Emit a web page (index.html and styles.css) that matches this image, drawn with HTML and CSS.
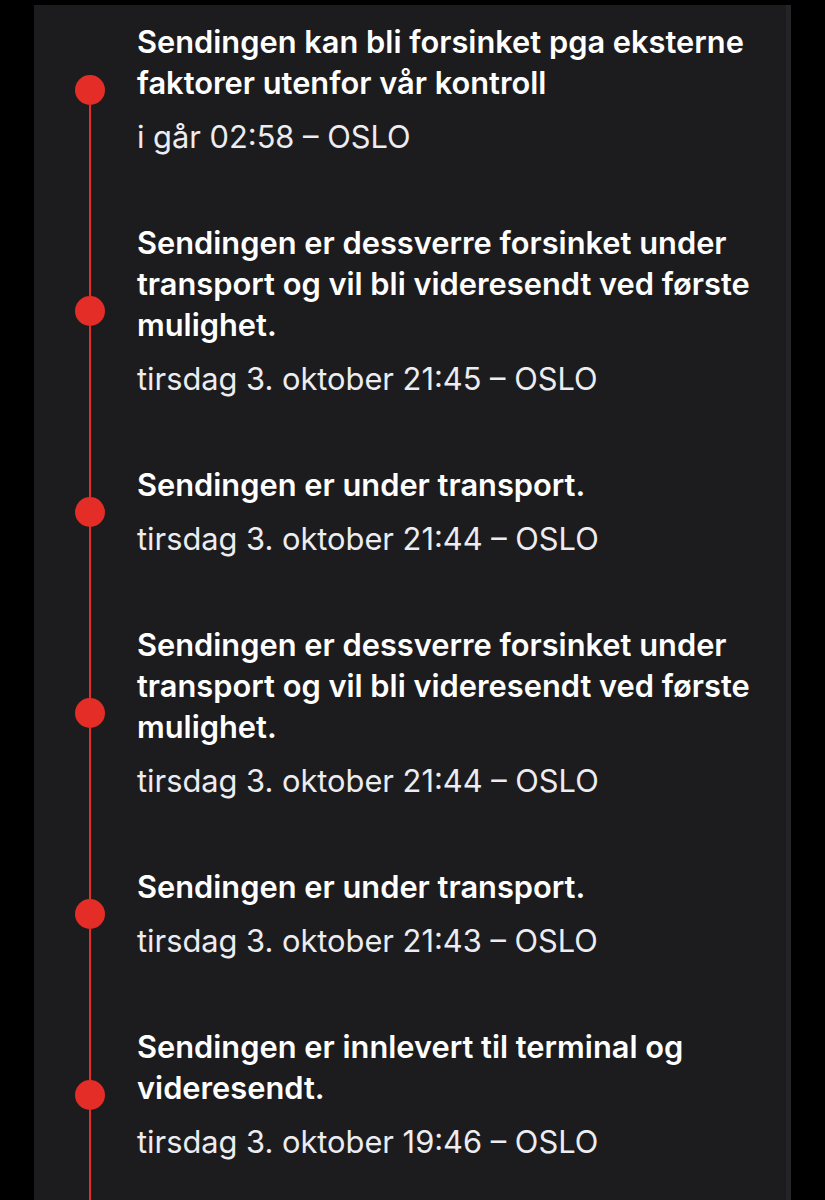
FILE: index.html
```html
<!DOCTYPE html>
<html lang="nb">
<head>
  <meta charset="utf-8">
  <title>Sporing</title>
  <link rel="stylesheet" href="styles.css">
</head>
<body>
  <div class="sheet">
    <ol class="timeline">
      <li class="event first">
        <div class="rail"><span class="seg"></span><span class="dot"></span><span class="seg"></span></div>
        <div class="event-body">
          <p class="event-title">Sendingen kan bli forsinket pga eksterne faktorer utenfor vår kontroll</p>
          <p class="event-meta">i går 02:58 – OSLO</p>
        </div>
      </li>
      <li class="event">
        <div class="rail"><span class="seg"></span><span class="dot"></span><span class="seg"></span></div>
        <div class="event-body">
          <p class="event-title">Sendingen er dessverre forsinket under transport og vil bli videresendt ved første mulighet.</p>
          <p class="event-meta">tirsdag 3. oktober 21:45 – OSLO</p>
        </div>
      </li>
      <li class="event">
        <div class="rail"><span class="seg"></span><span class="dot"></span><span class="seg"></span></div>
        <div class="event-body">
          <p class="event-title">Sendingen er under transport.</p>
          <p class="event-meta">tirsdag 3. oktober 21:44 – OSLO</p>
        </div>
      </li>
      <li class="event">
        <div class="rail"><span class="seg"></span><span class="dot"></span><span class="seg"></span></div>
        <div class="event-body">
          <p class="event-title">Sendingen er dessverre forsinket under transport og vil bli videresendt ved første mulighet.</p>
          <p class="event-meta">tirsdag 3. oktober 21:44 – OSLO</p>
        </div>
      </li>
      <li class="event">
        <div class="rail"><span class="seg"></span><span class="dot"></span><span class="seg"></span></div>
        <div class="event-body">
          <p class="event-title">Sendingen er under transport.</p>
          <p class="event-meta">tirsdag 3. oktober 21:43 – OSLO</p>
        </div>
      </li>
      <li class="event">
        <div class="rail"><span class="seg"></span><span class="dot"></span><span class="seg"></span></div>
        <div class="event-body">
          <p class="event-title">Sendingen er innlevert til terminal og videresendt.</p>
          <p class="event-meta">tirsdag 3. oktober 19:46 – OSLO</p>
        </div>
      </li>
    </ol>
    <div class="scroll-edge"></div>
  </div>
</body>
</html>
```

FILE: styles.css
```css
html, body {
    margin: 0;
    background: #000;
    height: 1200px;
    overflow: hidden;
    font-family: Inter, "Noto Sans", "Liberation Sans", sans-serif;
    -webkit-font-smoothing: antialiased;
}
.sheet {
    display: flex;
    margin: 5px 0 0 34px;
    width: 757px;
    height: 1195px;
    background: #1c1c1e;
    overflow: hidden;
}
/* list scrolls under the top edge; tail of the line keeps going past the last event */
.timeline {
    flex: 1;
    list-style: none;
    margin: -16px 0 0 0;
    padding: 0 0 20px;
    background: linear-gradient(#e32d26, #e32d26) 55px 100% / 2px 20px no-repeat;
}
.scroll-edge {
    width: 5px;
    background: #242427;
}
.event {
    display: flex;
    gap: 32px;
    padding-left: 41px;
}
.rail {
    width: 30px;
    display: flex;
    flex-direction: column;
    align-items: center;
}
.seg {
    flex: 1;
    width: 2px;
    background: #e32d26;
}
.first .seg:first-child {
    background: transparent;
}
.dot {
    width: 30px;
    height: 30px;
    border-radius: 50%;
    background: #e32d26;
}
.event-body {
    flex: 1;
    padding: 32px 8px 32px 0;
}
.event-title {
    margin: 0;
    font-size: 30.8px;
    line-height: 41px;
    font-weight: 600;
    color: #fff;
}
.event-meta {
    margin: 13px 0 0;
    font-size: 30.8px;
    line-height: 42px;
    color: #ececf1;
}
```
